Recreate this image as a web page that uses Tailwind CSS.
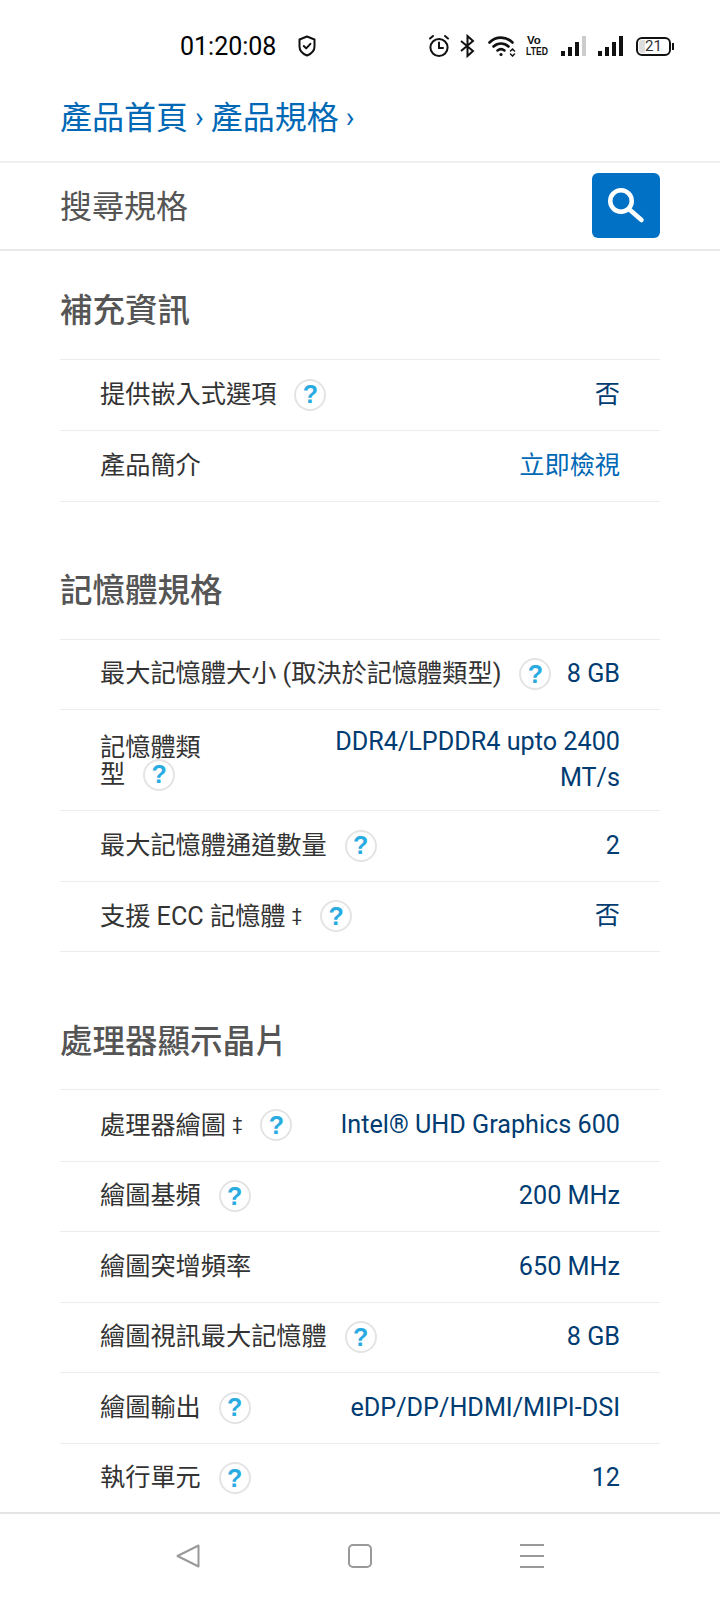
<!DOCTYPE html>
<html lang="zh-Hant">
<head>
  <title>產品規格</title>
  <meta charset="UTF-8" />
  <meta name="viewport" content="width=device-width, initial-scale=1" />
  <script src="https://cdn.jsdelivr.net/npm/@tailwindcss/browser@4"></script>
</head>
<body class="bg-white font-['Roboto','Noto_Sans_CJK_TC',sans-serif]">
<div class="h-[1600px] w-[720px] flex flex-col overflow-hidden">

  <!-- Status bar -->
  <div class="h-[80px] shrink-0 flex items-center pl-[180px] pt-[12px] text-black">
    <span class="text-[25px] leading-none">01:20:08</span>
    <svg class="ml-[22px] w-[18px] h-[22px]" viewBox="0 0 18 22" fill="none" stroke="#111" stroke-width="2" stroke-linejoin="round" stroke-linecap="round"><path d="M9 1.5 16.5 4.5V11.5C16.5 16 13 19 9 20.5 5 19 1.5 16 1.5 11.5V4.5Z"/><path d="M5.8 11 8.2 13.4 12.4 8.8"/></svg>
    <div class="ml-auto mr-[46px] flex items-center">
      <svg class="w-[22px] h-[24px]" viewBox="0 0 22 24" fill="none" stroke="#111" stroke-width="2" stroke-linecap="round"><circle cx="11" cy="13.5" r="8.6"/><path d="M11 8.5V14H15"/><path d="M2 4.5 5 2M20 4.5 17 2"/></svg>
      <svg class="ml-[10px] w-[15px] h-[24px]" viewBox="0 0 15 24" fill="none" stroke="#111" stroke-width="2" stroke-linejoin="miter"><path d="M1 7 13 17 7.5 22V2L13 7 1 17"/></svg>
      <svg class="ml-[13px] w-[28px] h-[22px]" viewBox="0 0 28 22" fill="none" stroke="#111" stroke-width="2.6" stroke-linecap="round"><path d="M1.5 7.5C8 1 18 1 24.5 7.5"/><path d="M5.5 11.5C10 7.5 16 7.5 20.5 11.5"/><path d="M9.5 15.5C11.5 14 14.5 14 16.5 15.5"/><circle cx="13" cy="19.5" r="1.6" fill="#111" stroke="none"/><path d="M22.5 16 24.5 14 26.5 16M22.5 19 24.5 21 26.5 19" stroke-width="1.5"/></svg>
      <div class="ml-[10px] w-[22px] flex flex-col text-[11.5px] leading-[11.5px] font-bold text-[#111] font-['Liberation_Sans',sans-serif]">
        <span class="pl-[1px]">Vo</span>
        <span class="origin-left scale-x-[0.75] whitespace-nowrap">LTED</span>
      </div>
      <div class="ml-[13px] flex items-end gap-[3px] h-[20px]">
        <div class="w-[4px] h-[5px] bg-[#111]"></div><div class="w-[4px] h-[9px] bg-[#111]"></div><div class="w-[4px] h-[14px] bg-[#111]"></div><div class="w-[4px] h-[20px] bg-[#ccc]"></div>
      </div>
      <div class="ml-[12px] flex items-end gap-[3px] h-[20px]">
        <div class="w-[4px] h-[5px] bg-[#111]"></div><div class="w-[4px] h-[9px] bg-[#111]"></div><div class="w-[4px] h-[14px] bg-[#111]"></div><div class="w-[4px] h-[20px] bg-[#111]"></div>
      </div>
      <div class="ml-[13px] relative w-[35px] h-[19px] border-2 border-[#111] rounded-[6px] flex items-center justify-center text-[15px] leading-none text-[#333]">
        <div class="absolute left-[1px] top-[1px] bottom-[1px] w-[6px] bg-[#ddd] rounded-l-[3px]"></div>
        <span class="relative">21</span>
      </div>
      <div class="ml-[1px] w-[2px] h-[7px] bg-[#111]"></div>
    </div>
  </div>

  <!-- Breadcrumb -->
  <div class="h-[83px] shrink-0 border-b-2 border-[#efefef] flex items-center pl-[60px] pb-[6px] text-[32px] leading-none text-[#0068b5]">
    <a href="#">產品首頁</a><span class="mx-[7px] text-[29px]">›</span><a href="#">產品規格</a><span class="ml-[7px] text-[29px]">›</span>
  </div>

  <!-- Search -->
  <div class="h-[88px] shrink-0 border-b-2 border-[#e8e8e8] flex items-center justify-between px-[60px]">
    <span class="pt-[2px] text-[32px] leading-none text-[#555]">搜尋規格</span>
    <button class="mb-[2px] w-[68px] h-[65px] rounded-[6px] bg-[#0071c5] flex items-center justify-center">
      <svg class="w-[38px] h-[38px]" viewBox="0 0 38 38" fill="none" stroke="#fff" stroke-linecap="round"><circle cx="14" cy="15" r="10.75" stroke-width="4.5"/><path d="M23 24 34.5 34" stroke-width="4.5"/></svg>
    </button>
  </div>

  <!-- Specs -->
  <div class="flex-1 overflow-hidden px-[60px] text-[25.2px] leading-[34px]">

    <h2 class="h-[108px] flex items-center pt-[12px] text-[32.5px] font-medium text-[#555]">補充資訊</h2>
    <div class="border-t border-t-[#ececec] border-b border-b-[#ececec]">
      <div class="h-[69.5px] px-[40px] flex items-center justify-between">
        <div class="flex items-center text-[#333]">提供嵌入式選項<span class="ml-[18px] w-[32px] h-[32px] rounded-full border-2 border-[#e4e4e4] flex items-center justify-center text-[25px] font-bold leading-none text-[#29abe2] font-['Liberation_Sans',sans-serif]">?</span></div>
        <div class="text-[#003c71]">否</div>
      </div>
      <div class="h-[71px] px-[40px] flex items-center justify-between border-t border-[#ececec]">
        <div class="text-[#333]">產品簡介</div>
        <a href="#" class="text-[#0068b5]">立即檢視</a>
      </div>
    </div>

    <h2 class="h-[137px] flex items-center pt-[41px] text-[32.5px] font-medium text-[#555]">記憶體規格</h2>
    <div class="border-t border-t-[#ececec] border-b border-b-[#ececec]">
      <div class="h-[69.5px] px-[40px] flex items-center justify-between">
        <div class="flex items-center text-[#333]">最大記憶體大小 (取決於記憶體類型)<span class="ml-[18px] w-[32px] h-[32px] rounded-full border-2 border-[#e4e4e4] flex items-center justify-center text-[25px] font-bold leading-none text-[#29abe2] font-['Liberation_Sans',sans-serif]">?</span></div>
        <div class="text-[#003c71]">8 GB</div>
      </div>
      <div class="h-[101px] px-[40px] flex items-start justify-between border-t border-[#ececec] pt-[14px]">
        <div class="pt-[10px] text-[#333] leading-[27px]">
          <div>記憶體類</div>
          <div class="h-[27px] flex items-center">型<span class="ml-[18px] w-[32px] h-[32px] rounded-full border-2 border-[#e4e4e4] flex items-center justify-center text-[25px] font-bold leading-none text-[#29abe2] font-['Liberation_Sans',sans-serif]">?</span></div>
        </div>
        <div class="w-[300px] text-right leading-[36px] text-[#003c71]">DDR4/LPDDR4 upto 2400 MT/s</div>
      </div>
      <div class="h-[70.5px] px-[40px] flex items-center justify-between border-t border-[#ececec]">
        <div class="flex items-center text-[#333]">最大記憶體通道數量<span class="ml-[18px] w-[32px] h-[32px] rounded-full border-2 border-[#e4e4e4] flex items-center justify-center text-[25px] font-bold leading-none text-[#29abe2] font-['Liberation_Sans',sans-serif]">?</span></div>
        <div class="text-[#003c71]">2</div>
      </div>
      <div class="h-[70.5px] px-[40px] flex items-center justify-between border-t border-[#ececec]">
        <div class="flex items-center text-[#333]"><span>支援 ECC 記憶體 <span class="text-[18px] align-[4px]">‡</span></span><span class="ml-[18px] w-[32px] h-[32px] rounded-full border-2 border-[#e4e4e4] flex items-center justify-center text-[25px] font-bold leading-none text-[#29abe2] font-['Liberation_Sans',sans-serif]">?</span></div>
        <div class="text-[#003c71]">否</div>
      </div>
    </div>

    <h2 class="h-[137px] flex items-center pt-[43px] text-[32.5px] font-medium text-[#555]">處理器顯示晶片</h2>
    <div class="border-t border-t-[#ececec]">
      <div class="h-[70.5px] px-[40px] flex items-center justify-between">
        <div class="flex items-center text-[#333]"><span>處理器繪圖 <span class="text-[18px] align-[4px]">‡</span></span><span class="ml-[18px] w-[32px] h-[32px] rounded-full border-2 border-[#e4e4e4] flex items-center justify-center text-[25px] font-bold leading-none text-[#29abe2] font-['Liberation_Sans',sans-serif]">?</span></div>
        <div class="text-[#003c71]">Intel® UHD Graphics 600</div>
      </div>
      <div class="h-[70.5px] px-[40px] flex items-center justify-between border-t border-[#ececec]">
        <div class="flex items-center text-[#333]">繪圖基頻<span class="ml-[18px] w-[32px] h-[32px] rounded-full border-2 border-[#e4e4e4] flex items-center justify-center text-[25px] font-bold leading-none text-[#29abe2] font-['Liberation_Sans',sans-serif]">?</span></div>
        <div class="text-[#003c71]">200 MHz</div>
      </div>
      <div class="h-[70.5px] px-[40px] flex items-center justify-between border-t border-[#ececec]">
        <div class="text-[#333]">繪圖突增頻率</div>
        <div class="text-[#003c71]">650 MHz</div>
      </div>
      <div class="h-[70.5px] px-[40px] flex items-center justify-between border-t border-[#ececec]">
        <div class="flex items-center text-[#333]">繪圖視訊最大記憶體<span class="ml-[18px] w-[32px] h-[32px] rounded-full border-2 border-[#e4e4e4] flex items-center justify-center text-[25px] font-bold leading-none text-[#29abe2] font-['Liberation_Sans',sans-serif]">?</span></div>
        <div class="text-[#003c71]">8 GB</div>
      </div>
      <div class="h-[70.5px] px-[40px] flex items-center justify-between border-t border-[#ececec]">
        <div class="flex items-center text-[#333]">繪圖輸出<span class="ml-[18px] w-[32px] h-[32px] rounded-full border-2 border-[#e4e4e4] flex items-center justify-center text-[25px] font-bold leading-none text-[#29abe2] font-['Liberation_Sans',sans-serif]">?</span></div>
        <div class="text-[#003c71]">eDP/DP/HDMI/MIPI-DSI</div>
      </div>
      <div class="h-[70.5px] px-[40px] flex items-center justify-between border-t border-[#ececec]">
        <div class="flex items-center text-[#333]">執行單元<span class="ml-[18px] w-[32px] h-[32px] rounded-full border-2 border-[#e4e4e4] flex items-center justify-center text-[25px] font-bold leading-none text-[#29abe2] font-['Liberation_Sans',sans-serif]">?</span></div>
        <div class="text-[#003c71]">12</div>
      </div>
    </div>
  </div>

  <!-- Nav bar -->
  <div class="h-[88px] shrink-0 border-t-2 border-[#e4e4e4] flex items-center justify-center gap-[148px] pb-[2px]">
    <svg class="w-[24px] h-[24px]" viewBox="0 0 24 24" fill="none" stroke="#999" stroke-width="2" stroke-linejoin="round"><path d="M1.5 12 22.5 1.5V22.5Z"/></svg>
    <div class="w-[24px] h-[24px] border-2 border-[#999] rounded-[5px]"></div>
    <div class="w-[24px] h-[24px] flex flex-col justify-between">
      <div class="h-[2px] bg-[#999]"></div><div class="h-[2px] bg-[#999]"></div><div class="h-[2px] bg-[#999]"></div>
    </div>
  </div>
</div>
</body>
</html>
